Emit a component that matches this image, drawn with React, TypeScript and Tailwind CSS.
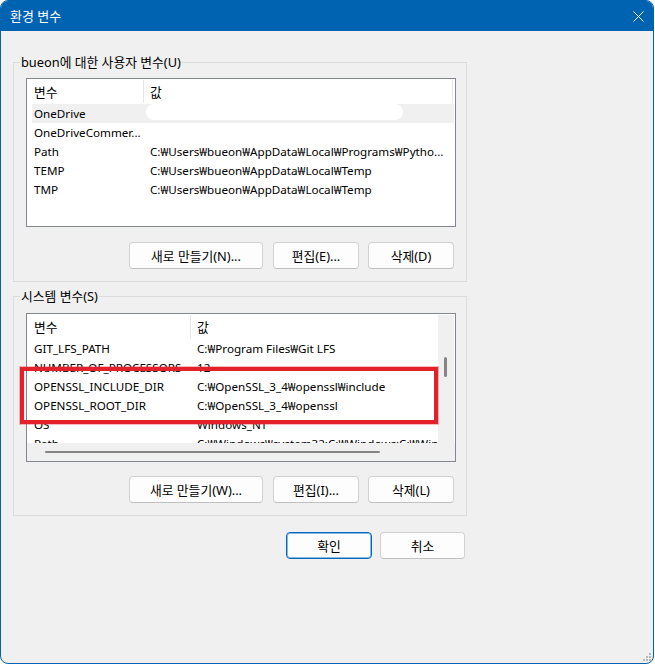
import React from "react";

const rows1: [string, string][] = [
  ["OneDrive", ""],
  ["OneDriveCommer...", ""],
  ["Path", "C:₩Users₩bueon₩AppData₩Local₩Programs₩Pytho..."],
  ["TEMP", "C:₩Users₩bueon₩AppData₩Local₩Temp"],
  ["TMP", "C:₩Users₩bueon₩AppData₩Local₩Temp"],
];

const rows2: [string, string][] = [
  ["GIT_LFS_PATH", "C:₩Program Files₩Git LFS"],
  ["NUMBER_OF_PROCESSORS", "12"],
  ["OPENSSL_INCLUDE_DIR", "C:₩OpenSSL_3_4₩openssl₩include"],
  ["OPENSSL_ROOT_DIR", "C:₩OpenSSL_3_4₩openssl"],
  ["OS", "Windows_NT"],
  ["Path", "C:₩Windows₩system32;C:₩Windows;C:₩Windows₩System32₩Wbem"],
];

function Btn({
  w,
  children,
  primary,
}: {
  w: string;
  children: React.ReactNode;
  primary?: boolean;
}) {
  return (
    <div
      className={`h-[27px] ${w} flex items-center justify-center rounded-[4px] bg-[#fdfdfd] border text-[12.8px] leading-[16px] text-black ${
        primary
          ? "border-[#0067c0] shadow-[inset_0_0_0_1px_rgba(0,103,192,0.45)]"
          : "border-[#d2d2d2] border-b-[#c0c0c0]"
      }`}
    >
      {children}
    </div>
  );
}

export default function App() {
  return (
    <div className="w-[655px] h-[665px] bg-white font-['Noto_Sans','Noto_Sans_CJK_KR',sans-serif] text-[12px] leading-[16px] text-black">
      <div className="w-[654px] h-[664px] border border-[#0063b1] rounded-[8px] overflow-hidden bg-[#f0f0f0] relative flex flex-col">
        {/* Title bar */}
        <div className="h-[30px] shrink-0 bg-[#0063b1] flex items-center justify-between pl-[9px] pr-[9px] text-white">
          <span className="text-[13px]">환경 변수</span>
          <svg width="11" height="11" viewBox="0 0 11 11" className="block">
            <path d="M0.5 0.5 L10.5 10.5 M10.5 0.5 L0.5 10.5" stroke="white" strokeWidth="1" />
          </svg>
        </div>

        {/* Body */}
        <div className="flex flex-col pl-[12px] pt-[23px]">
          {/* User variables */}
          <fieldset className="w-[454px] border border-[#dcdcdc] pl-[6px] pr-[10px] pt-[8px] pb-[12px]">
            <legend className="px-[1px] leading-[16px] text-[12.8px]">bueon에 대한 사용자 변수(U)</legend>
            <div className="ml-[6px] w-[430px] h-[149px] border border-[#828790] bg-white relative overflow-hidden text-[11.65px]">
              <div className="h-[25px] flex text-[12.8px]">
                <div className="w-[117px] pl-[7px] border-r border-[#e5e5e5] my-[1px] flex items-center">변수</div>
                <div className="w-[309px] pl-[6px] border-r border-[#e5e5e5] my-[1px] flex items-center">값</div>
              </div>
              {rows1.map(([k, v], i) => (
                <div
                  key={k}
                  className={`h-[19px] ml-[5px] mr-[1px] flex items-center whitespace-nowrap ${
                    i === 0 ? "bg-[#f0f0f0]" : ""
                  }`}
                >
                  <div className="w-[112px] shrink-0 pl-[2px] overflow-hidden">{k}</div>
                  <div className="flex-1 pl-[6px] overflow-hidden">{v}</div>
                </div>
              ))}
              {/* redaction */}
              <div className="absolute left-[119px] top-[25px] w-[257px] h-[16px] rounded-full bg-white" />
            </div>
            <div className="mt-[15px] mr-[2px] flex justify-end gap-[10px]">
              <Btn w="w-[134px]">새로 만들기(N)...</Btn>
              <div className="flex gap-[9px]">
                <Btn w="w-[86px]">편집(E)...</Btn>
                <Btn w="w-[86px]">삭제(D)</Btn>
              </div>
            </div>
          </fieldset>

          {/* System variables */}
          <fieldset className="mt-[6px] w-[454px] border border-[#dcdcdc] pl-[6px] pr-[10px] pt-[9px] pb-[12px]">
            <legend className="px-[1px] leading-[16px] text-[12.8px]">시스템 변수(S)</legend>
            <div className="ml-[6px] w-[430px] h-[149px] border border-[#828790] bg-white relative flex flex-col text-[11.65px]">
              <div className="h-[129px] flex">
                <div className="flex-1 min-w-0 overflow-hidden">
                  <div className="h-[25px] flex text-[12.8px]">
                    <div className="w-[164px] shrink-0 pl-[7px] border-r border-[#e5e5e5] my-[1px] flex items-center">변수</div>
                    <div className="pl-[6px] flex items-center">값</div>
                  </div>
                  {rows2.map(([k, v]) => (
                    <div key={k} className="h-[19px] ml-[5px] flex items-center whitespace-nowrap">
                      <div className="w-[159px] shrink-0 pl-[2px] overflow-hidden">{k}</div>
                      <div className="flex-1 pl-[6px] overflow-hidden">{v}</div>
                    </div>
                  ))}
                </div>
                <div className="w-[16px] mt-[1px] mr-[1px] bg-[#f0f0f0] flex">
                  <div className="ml-[6px] mt-[42px] w-[3px] h-[20px] rounded-full bg-[#858585]" />
                </div>
              </div>
              <div className="flex-1 bg-[#f0f0f0] flex">
                <div className="ml-[18px] mt-[8px] w-[335px] h-[2px] rounded-full bg-[#858585]" />
              </div>
              {/* annotation */}
              <div className="absolute left-[-7px] top-[53px] w-[418px] h-[57px] border-[4px] border-[#e3212b] shadow-[0_0_0_1px_rgba(227,33,43,0.3)]" />
            </div>
            <div className="mt-[14px] mr-[2px] flex justify-end gap-[10px]">
              <Btn w="w-[134px]">새로 만들기(W)...</Btn>
              <div className="flex gap-[9px]">
                <Btn w="w-[86px]">편집(I)...</Btn>
                <Btn w="w-[86px]">삭제(L)</Btn>
              </div>
            </div>
          </fieldset>

          <div className="mt-[16px] w-[454px] pr-[2px] flex justify-end gap-[8px]">
            <Btn w="w-[86px]" primary>
              확인
            </Btn>
            <Btn w="w-[85px]">취소</Btn>
          </div>
        </div>

        {/* resize grip */}
        <svg
          width="10"
          height="10"
          viewBox="0 0 10 10"
          className="absolute right-[1px] bottom-[1px]"
        >
          <rect x="7" y="1" width="2" height="2" fill="#b8b8b8" />
          <rect x="4" y="4" width="2" height="2" fill="#b8b8b8" />
          <rect x="7" y="4" width="2" height="2" fill="#b8b8b8" />
          <rect x="1" y="7" width="2" height="2" fill="#b8b8b8" />
          <rect x="4" y="7" width="2" height="2" fill="#b8b8b8" />
          <rect x="7" y="7" width="2" height="2" fill="#b8b8b8" />
        </svg>
      </div>
    </div>
  );
}
